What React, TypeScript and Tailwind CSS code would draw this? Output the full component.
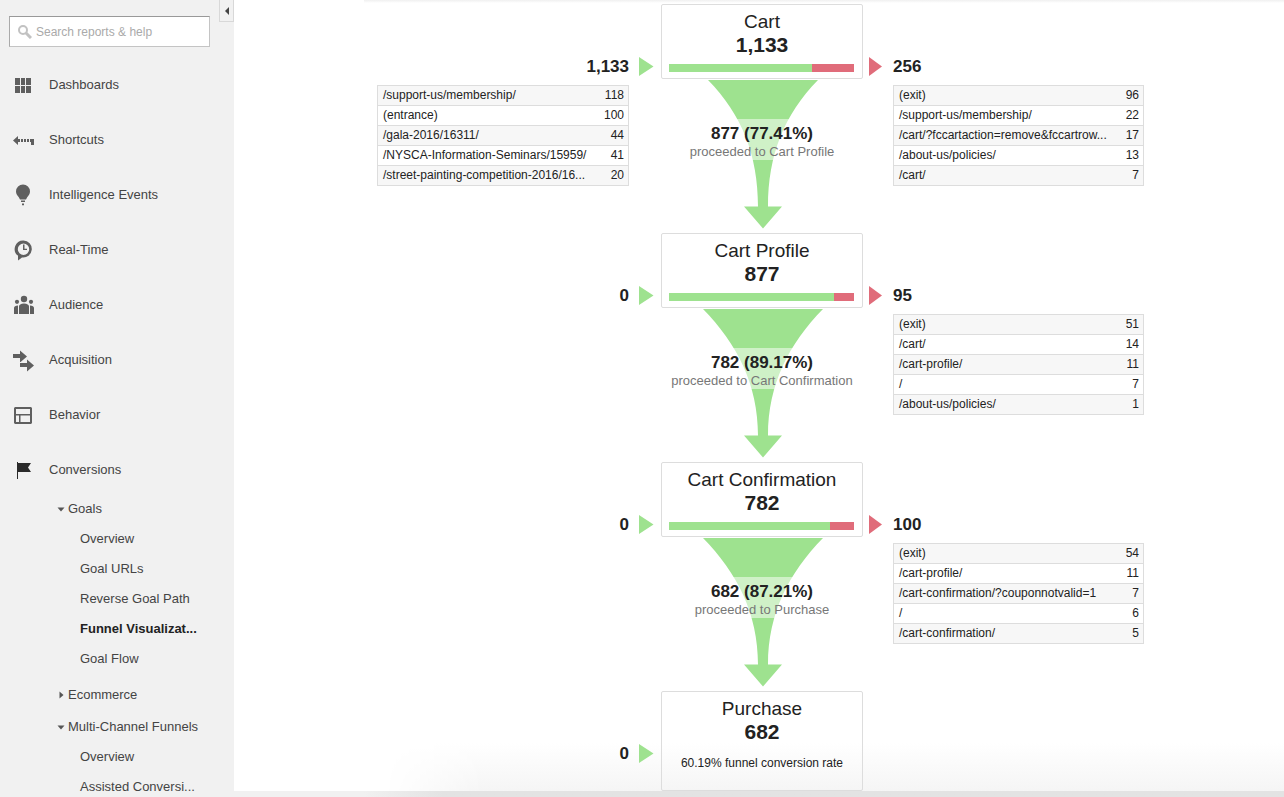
import type { ReactNode } from 'react';

type PageRow = [path: string, count: number];

interface Stage {
  name: string;
  value: string;
  entered: string;
  entrances?: PageRow[];
  exited: string;
  exits: PageRow[];
  kept: number;
  rate: string;
  next: string;
  // half of the funnel's width at its mouth
  mouth: number;
}

const stages: Stage[] = [
  {
    name: 'Cart',
    value: '1,133',
    entered: '1,133',
    entrances: [
      ['/support-us/membership/', 118],
      ['(entrance)', 100],
      ['/gala-2016/16311/', 44],
      ['/NYSCA-Information-Seminars/15959/', 41],
      ['/street-painting-competition-2016/16...', 20],
    ],
    exited: '256',
    exits: [
      ['(exit)', 96],
      ['/support-us/membership/', 22],
      ['/cart/?fccartaction=remove&fccartrow...', 17],
      ['/about-us/policies/', 13],
      ['/cart/', 7],
    ],
    kept: 77.41,
    rate: '877 (77.41%)',
    next: 'Cart Profile',
    mouth: 55,
  },
  {
    name: 'Cart Profile',
    value: '877',
    entered: '0',
    exited: '95',
    exits: [
      ['(exit)', 51],
      ['/cart/', 14],
      ['/cart-profile/', 11],
      ['/', 7],
      ['/about-us/policies/', 1],
    ],
    kept: 89.17,
    rate: '782 (89.17%)',
    next: 'Cart Confirmation',
    mouth: 60,
  },
  {
    name: 'Cart Confirmation',
    value: '782',
    entered: '0',
    exited: '100',
    exits: [
      ['(exit)', 54],
      ['/cart-profile/', 11],
      ['/cart-confirmation/?couponnotvalid=1', 7],
      ['/', 6],
      ['/cart-confirmation/', 5],
    ],
    kept: 87.21,
    rate: '682 (87.21%)',
    next: 'Purchase',
    mouth: 60,
  },
];

function Icon({ children }: { children: ReactNode }) {
  return (
    <svg width="24" height="24" viewBox="0 0 24 24" fill="#5f5f5f" aria-hidden="true" className="shrink-0">
      {children}
    </svg>
  );
}

const navItems: { label: string; icon: ReactNode }[] = [
  {
    label: 'Dashboards',
    icon: (
      <Icon>
        <path d="M4 5h5v7H4zM10 5h4v7h-4zM15 5h5v7h-5zM4 13h5v7H4zM10 13h4v7h-4zM15 13h5v7h-5z" />
      </Icon>
    ),
  },
  {
    label: 'Shortcuts',
    icon: (
      <Icon>
        <path d="M2 12.5 7 8v3h2v3H7v3zM10 11h2v3h-2zM13 11h2v3h-2zM16 11h2v3h-2zM19 11h4v6h-3v-3h-1z" />
      </Icon>
    ),
  },
  {
    label: 'Intelligence Events',
    icon: (
      <Icon>
        <path d="M12 1.500a7 7 0 0 1 7 7c0 2.800-1.500 4-2.800 5.700L15 16.500H9l-1.200-2.300C6.500 12.500 5 11.300 5 8.500a7 7 0 0 1 7-7z" />
        <path d="M10 17.500h4v1.500h-4zM11 20.500h2v1.800h-2z" />
      </Icon>
    ),
  },
  {
    label: 'Real-Time',
    icon: (
      <Icon>
        <path
          fillRule="evenodd"
          d="M12.500 2.500a8.500 8.500 0 1 1-1.500 16.900L7 22.500v-4.800A8.500 8.500 0 0 1 12.500 2.500zm0 3a5.700 5.700 0 1 0 0 11.400 5.700 5.700 0 0 0 0-11.400z"
        />
        <path d="M12 6.500h1.500v4.200H16V12h-4z" />
      </Icon>
    ),
  },
  {
    label: 'Audience',
    icon: (
      <Icon>
        <circle cx="13" cy="6" r="3.200" />
        <circle cx="6" cy="8.800" r="2.100" />
        <circle cx="20" cy="8.800" r="2.100" />
        <path d="M8 21v-7.500c0-1.600 1.800-3 5-3s5 1.400 5 3V21zM3 21v-6c0-1.600 1.500-2.500 4-2.500V21zM23 21v-6c0-1.600-1.500-2.500-4-2.500V21z" />
      </Icon>
    ),
  },
  {
    label: 'Acquisition',
    icon: (
      <Icon>
        <path d="M2 6h7V2.500l7 6-7 6V10H2z" />
        <path d="M9 15h7v-3.500l7 6-7 6V19H9z" />
        <path d="M9 14.500h7" stroke="#f1f1f1" />
      </Icon>
    ),
  },
  {
    label: 'Behavior',
    icon: (
      <Icon>
        <path fillRule="evenodd" d="M4 4h16l1 1v15l-1 1H4l-1-1V5zm1 2v5h14V6zm0 6.500V19h3v-6.500zm4.500 0V19H19v-6.500z" />
      </Icon>
    ),
  },
  {
    label: 'Conversions',
    icon: (
      <Icon>
        <path fill="#2b2b2b" d="M6 4h1v1h13l-3 4.500 3 4.500H7v7H6z" />
      </Icon>
    ),
  },
];

function NavGroup({ label, open, items = [] }: { label: string; open?: boolean; items?: string[] }) {
  return (
    <li>
      <button type="button" className="flex h-6 items-center gap-[3px] pl-[57px]">
        <svg width="8" height="8" viewBox="0 0 8 8" fill="#555" aria-hidden="true">
          <path d={open ? 'M0.500 2.500h7L4 6.500z' : 'M2.500 0.500v7l4-3.500z'} />
        </svg>
        {label}
      </button>
      {open && (
        <ul className="pt-[3px] pb-px">
          {items.map(item => (
            <li key={item} className="flex h-[30px] items-center pl-20">
              <a href="#" className={item.startsWith('Funnel') ? 'font-bold text-[#222]' : ''}>
                {item}
              </a>
            </li>
          ))}
        </ul>
      )}
    </li>
  );
}

function Sidebar() {
  return (
    <aside className="relative w-[234px] shrink-0 bg-[#f1f1f1] text-[13px] leading-4 text-[#444]">
      <button
        type="button"
        aria-label="Collapse"
        className="absolute top-0 right-0 flex h-[22px] w-[15px] items-center justify-center border border-t-0 border-[#d8d8d8]"
      >
        <svg width="6" height="8" viewBox="0 0 6 8" fill="#444" aria-hidden="true">
          <path d="M5 0v8L1 4z" />
        </svg>
      </button>

      <label className="mt-4 mr-6 ml-[9px] flex h-[31px] items-center gap-1 border border-[#c4c4c4] border-t-[#999] border-l-[#aaa] bg-white pl-2">
        <svg width="14" height="14" viewBox="0 0 14 14" fill="none" stroke="#c2c2c2" aria-hidden="true" className="shrink-0">
          <circle cx="5" cy="5" r="4" strokeWidth="2" />
          <path d="m8 8 5 5" strokeWidth="3" />
        </svg>
        <input
          type="text"
          aria-label="Search reports & help"
          placeholder="Search reports & help"
          className="w-full min-w-0 text-xs outline-none placeholder:text-[#aaa]"
        />
      </label>

      <nav className="pt-[10px]">
        <ul>
          {navItems.map(({ label, icon }) => (
            <li key={label}>
              <a href="#" className="flex h-[55px] items-center gap-[14px] pl-[11px]">
                {icon}
                {label}
              </a>
            </li>
          ))}
        </ul>
        <ul className="flex flex-col gap-2">
          <NavGroup
            label="Goals"
            open
            items={['Overview', 'Goal URLs', 'Reverse Goal Path', 'Funnel Visualizat...', 'Goal Flow']}
          />
          <NavGroup label="Ecommerce" />
          <NavGroup label="Multi-Channel Funnels" open items={['Overview', 'Assisted Conversi...']} />
        </ul>
      </nav>
    </aside>
  );
}

function PageTable({ label, rows }: { label: string; rows: PageRow[] }) {
  return (
    <table aria-label={label} className="w-full border-collapse border border-[#ddd] text-xs leading-4">
      <tbody>
        {rows.map(([path, count]) => (
          <tr key={path} className="h-5 border border-[#ddd] odd:bg-[#f7f7f7]">
            <td className="pb-[2px] pl-[5px] whitespace-nowrap">{path}</td>
            <td className="pr-1 pb-[2px] text-right">{count}</td>
          </tr>
        ))}
      </tbody>
    </table>
  );
}

function Entrances({ total, rows }: { total: string; rows?: PageRow[] }) {
  return (
    <>
      <div className="pt-[53px]">
        <p className="mb-2 text-right text-[17px] leading-5 font-bold">{total}</p>
        {rows && <PageTable label="Entrances" rows={rows} />}
      </div>
      <svg width="15" height="20" viewBox="0 0 15 20" aria-hidden="true" className="mt-[53px] ml-[10px]">
        <path d="M0 0v19l14.500-9.500z" fill="#9ee28f" />
      </svg>
    </>
  );
}

function Funnel({ stage }: { stage: Stage }) {
  const left = 102 - stage.mouth;
  const right = 102 + stage.mouth;
  return (
    <div className="relative h-[154px]">
      <svg width="202" height="154" viewBox="0 0 202 154" fill="#9ee28f" aria-hidden="true">
        <path
          d={`M${left} 1C${left + 34} 36 97 76 97 127.500H83L102 149.500 121 127.500H107C107 76 ${right - 34} 36 ${right} 1Z`}
        />
      </svg>
      <div className="absolute inset-x-0 top-10 h-[41px] bg-white/50" />
      <div className="absolute inset-x-0 top-[45px] text-center">
        <p className="text-[17px] leading-5 font-bold">{stage.rate}</p>
        <p className="text-[13px] leading-4 text-[#777]">proceeded to {stage.next}</p>
      </div>
    </div>
  );
}

function StageRow({ stage }: { stage: Stage }) {
  return (
    <section className="grid grid-cols-[252px_32px_202px_30px_251px] items-start">
      <Entrances total={stage.entered} rows={stage.entrances} />
      <div>
        <div className="rounded-xs border border-[#ddd] bg-white px-[7px] pt-[5px] pb-[6px] text-center">
          <h2 className="text-[19px] leading-6">{stage.name}</h2>
          <p className="text-[21px] leading-[22px] font-bold">{stage.value}</p>
          <div className="mt-2 mr-px h-2 bg-[#e06c7a]">
            <div className="h-2 bg-[#9ee28f]" style={{ width: `${stage.kept}%` }} />
          </div>
        </div>
        <Funnel stage={stage} />
      </div>
      <svg width="13" height="20" viewBox="0 0 13 20" aria-hidden="true" className="mt-[53px] ml-[6px]">
        <path d="M0 0v19l13-9.500z" fill="#e06c7a" />
      </svg>
      <div className="pt-[53px]">
        <p className="mb-2 text-[17px] leading-5 font-bold">{stage.exited}</p>
        <PageTable label="Exits" rows={stage.exits} />
      </div>
    </section>
  );
}

export default function App() {
  return (
    <div className="flex h-screen overflow-hidden bg-[#f1f1f1] font-['Liberation_Sans',Arial,sans-serif] text-[#222]">
      <Sidebar />
      <div className="flex min-w-0 flex-1 flex-col">
        <main className="relative flex flex-1 justify-center bg-white pt-1 pl-[3px]">
          <div className="absolute top-0 right-0 left-[130px] h-[3px] bg-linear-to-b from-[#f0f0f0] to-white" />
          <div className="absolute right-0 bottom-0 left-[150px] h-12 bg-linear-to-b from-white to-[#f5f5f5] mask-[linear-gradient(to_right,transparent,black_100px)]" />
          <div className="relative">
            {stages.map(stage => (
              <StageRow key={stage.name} stage={stage} />
            ))}
            <section className="grid grid-cols-[252px_32px_202px_30px_251px] items-start">
              <Entrances total="0" />
              <div className="rounded-xs border border-[#ddd] pt-[5px] pb-[17px] text-center">
                <h2 className="text-[19px] leading-6">Purchase</h2>
                <p className="text-[21px] leading-[22px] font-bold">682</p>
                <p className="mt-[10px] text-xs leading-5">60.19% funnel conversion rate</p>
              </div>
            </section>
          </div>
        </main>
        <div className="h-[6px] shrink-0 bg-linear-to-r from-[#f1f1f1] from-[130px] to-[#e3e3e3] to-[210px]" />
      </div>
    </div>
  );
}
